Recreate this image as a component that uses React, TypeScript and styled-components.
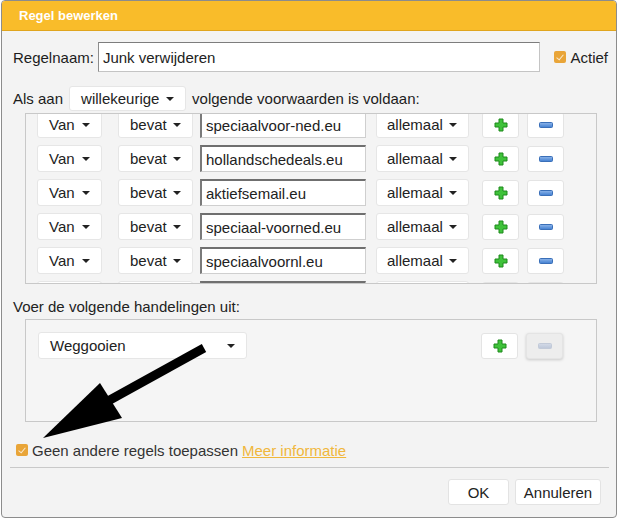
import React from "react";
import styled, { createGlobalStyle } from "styled-components";

const GlobalStyle = createGlobalStyle`
  html, body {
    margin: 0;
    padding: 0;
    background: #ffffff;
  }
  body {
    font-family: "Liberation Sans", Arial, sans-serif;
    color: #222;
  }
`;

type Condition = { value: string; partial?: boolean };

const conditions: Condition[] = [
  { value: "speciaalvoor-ned.eu" },
  { value: "hollandschedeals.eu" },
  { value: "aktiefsemail.eu" },
  { value: "speciaal-voorned.eu" },
  { value: "speciaalvoornl.eu" },
  // the next row is scrolled almost out of view
  { value: "", partial: true },
];

const PlusIcon = () => (
  <svg width="14" height="14" viewBox="0 0 14 14">
    <path
      d="M5 1h4v4h4v4H9v4H5V9H1V5h4z"
      fill="#3fc23a"
      stroke="#1f8a1c"
      strokeWidth="1"
      strokeLinejoin="round"
    />
  </svg>
);

const MinusIcon = ({ faded }: { faded?: boolean }) => (
  <svg width="14" height="6" viewBox="0 0 14 6">
    <defs>
      <linearGradient id={faded ? "mf" : "mb"} x1="0" y1="0" x2="0" y2="1">
        <stop offset="0" stopColor={faded ? "#d4dbe8" : "#8fb6ea"} />
        <stop offset="1" stopColor={faded ? "#bcc6d8" : "#3f7dd0"} />
      </linearGradient>
    </defs>
    <rect
      x="0.5"
      y="0.5"
      width="13"
      height="5"
      rx="1"
      fill={`url(#${faded ? "mf" : "mb"})`}
      stroke={faded ? "#c2cad8" : "#3a6fb8"}
    />
  </svg>
);

const App = () => {
  return (
    <>
      <GlobalStyle />
      <Dialog>
        <Header>Regel bewerken</Header>
        <Body>
          <NameRow>
            <Label>Regelnaam:</Label>
            <NameInput>Junk verwijderen</NameInput>
            <Check />
            <CheckLabel>Actief</CheckLabel>
          </NameRow>
          <FilterRow>
            <Label>Als aan</Label>
            <Select $width={117}>
              willekeurige
              <Caret />
            </Select>
            <Label>volgende voorwaarden is voldaan:</Label>
          </FilterRow>
          <ConditionBox>
            <ConditionList>
              {conditions.map((c, i) => (
                <ConditionRow key={i}>
                  <Select $width={65}>
                    {!c.partial && "Van"}
                    <Caret />
                  </Select>
                  <Select $width={75} $gap={16}>
                    {!c.partial && "bevat"}
                    <Caret />
                  </Select>
                  <ValueInput>{c.value}</ValueInput>
                  <Select $width={93} $gap={10} $indent={10}>
                    {!c.partial && "allemaal"}
                    <Caret />
                  </Select>
                  <IconButton $gap={13}>
                    <PlusIcon />
                  </IconButton>
                  <IconButton>
                    <MinusIcon />
                  </IconButton>
                </ConditionRow>
              ))}
            </ConditionList>
          </ConditionBox>
          <SectionLabel>Voer de volgende handelingen uit:</SectionLabel>
          <ActionBox>
            <ActionRow>
              <Select $width={209}>
                Weggooien
                <Caret />
              </Select>
              <Spacer />
              <IconButton>
                <PlusIcon />
              </IconButton>
              <IconButton $disabled>
                <MinusIcon faded />
              </IconButton>
            </ActionRow>
          </ActionBox>
          <StopRow>
            <Check />
            <span>Geen andere regels toepassen</span>
            <MoreLink>Meer informatie</MoreLink>
          </StopRow>
        </Body>
        <Separator />
        <Footer>
          <FooterButton $width={61}>OK</FooterButton>
          <FooterButton $width={86}>Annuleren</FooterButton>
        </Footer>
        <Arrow viewBox="0 0 616 518">
          <line x1="203" y1="348" x2="98" y2="406" stroke="#000" strokeWidth="9" />
          <polygon points="42,438 99,383 121,418" fill="#000" />
        </Arrow>
      </Dialog>
    </>
  );
};

export default App;

const Dialog = styled.div`
  position: relative;
  box-sizing: border-box;
  width: 616px;
  height: 518px;
  margin-left: 1px;
  border: 1px solid #8c8c8c;
  border-radius: 4px;
  background: #f3f3f3;
  overflow: hidden;
  display: flex;
  flex-direction: column;
`;

const Header = styled.div`
  height: 29px;
  flex: none;
  background: #f9bc2a;
  color: #fff;
  font-size: 13px;
  font-weight: 700;
  line-height: 29px;
  padding-left: 17px;
  border-bottom: 1px solid #e0a51e;
`;

const Body = styled.div`
  display: flex;
  flex-direction: column;
  padding: 0 8px 0 11px;
  font-size: 15px;
`;

const Label = styled.span`
  font-size: 15px;
  color: #1c1c1c;
  white-space: nowrap;
`;

const NameRow = styled.div`
  display: flex;
  align-items: center;
  margin-top: 11px;
  height: 30px;
`;

const NameInput = styled.div`
  box-sizing: border-box;
  width: 444px;
  height: 30px;
  margin-left: 4px;
  background: #fff;
  border: 1px solid #c4c4c4;
  border-top-color: #7d7d7d;
  border-left-color: #8d8d8d;
  padding-left: 4px;
  display: flex;
  align-items: center;
`;

const Check = styled.span`
  position: relative;
  flex: none;
  width: 12px;
  height: 12px;
  border-radius: 2px;
  background: #e9a538;
  margin-left: 14px;
  margin-right: 4px;

  &::after {
    content: "";
    position: absolute;
    left: 4px;
    top: 2px;
    width: 3px;
    height: 6px;
    border: solid rgba(255, 255, 255, 0.75);
    border-width: 0 1px 1px 0;
    transform: rotate(40deg);
  }
`;

const CheckLabel = styled.span`
  font-size: 15px;
`;

const FilterRow = styled.div`
  display: flex;
  align-items: center;
  gap: 6px;
  margin-top: 14px;
  height: 25px;

  & > div {
    height: 25px;
  }
`;

const Select = styled.div<{ $width: number; $gap?: number; $indent?: number }>`
  box-sizing: border-box;
  flex: none;
  width: ${(p) => p.$width}px;
  height: 27px;
  margin-left: ${(p) => p.$gap ?? 0}px;
  padding: 0 11px 0 ${(p) => p.$indent ?? 11}px;
  display: flex;
  align-items: center;
  justify-content: space-between;
  background: #fff;
  border: 1px solid #e6e6e6;
  border-radius: 3px;
  font-size: 15px;
  color: #222;

  & > span:only-child {
    margin-left: auto;
  }
`;

const Caret = styled.span`
  width: 0;
  height: 0;
  border-left: 4px solid transparent;
  border-right: 4px solid transparent;
  border-top: 4px solid #222;
`;

const ConditionBox = styled.div`
  box-sizing: border-box;
  height: 171px;
  margin: 2px 11px 0 12px;
  border: 1px solid #c8c8c8;
  background: #f4f4f4;
  overflow: hidden;
`;

const ConditionList = styled.div`
  display: flex;
  flex-direction: column;
  gap: 7px;
  margin-top: -3px;
  padding-left: 11px;
`;

const ConditionRow = styled.div`
  display: flex;
  align-items: center;
`;

const ValueInput = styled.div`
  box-sizing: border-box;
  flex: none;
  width: 166px;
  height: 27px;
  margin-left: 7px;
  padding-left: 4px;
  display: flex;
  align-items: center;
  background: #fff;
  border: 1px solid #cfcfcf;
  border-top: 2px solid #6f6f6f;
  border-left: 2px solid #7a7a7a;
  font-size: 15px;
`;

const IconButton = styled.div<{ $disabled?: boolean; $gap?: number }>`
  box-sizing: border-box;
  flex: none;
  width: 37px;
  height: 26px;
  margin-left: ${(p) => p.$gap ?? 8}px;
  display: flex;
  align-items: center;
  justify-content: center;
  background: ${(p) => (p.$disabled ? "#ededed" : "#fff")};
  border: 1px solid #e4e4e4;
  border-radius: 3px;
  box-shadow: ${(p) => (p.$disabled ? "0 1px 3px rgba(0,0,0,0.18)" : "none")};
`;

const SectionLabel = styled.div`
  margin-top: 14px;
  font-size: 15px;
  line-height: 18px;
`;

const ActionBox = styled.div`
  box-sizing: border-box;
  height: 103px;
  margin: 3px 11px 0 12px;
  padding: 12px 0 0 12px;
  border: 1px solid #c8c8c8;
  background: #f5f5f5;
`;

const ActionRow = styled.div`
  display: flex;
  align-items: center;
  width: 525px;
`;

const Spacer = styled.div`
  flex: 1;
`;

const StopRow = styled.div`
  display: flex;
  align-items: center;
  margin-top: 19px;
  height: 18px;
  font-size: 15px;
  color: #333;

  & > span:first-child {
    margin-left: 3px;
  }
`;

const MoreLink = styled.a`
  margin-left: 4px;
  color: #f0b73c;
  text-decoration: underline;
  cursor: pointer;
`;

const Separator = styled.div`
  height: 1px;
  margin: 8px 7px 0 8px;
  background: #c9c9c9;
`;

const Footer = styled.div`
  display: flex;
  justify-content: flex-end;
  gap: 6px;
  margin-top: 11px;
  padding-right: 15px;
`;

const FooterButton = styled.div<{ $width: number }>`
  box-sizing: border-box;
  width: ${(p) => p.$width}px;
  height: 26px;
  display: flex;
  align-items: center;
  justify-content: center;
  background: #fff;
  border: 1px solid #e3e3e3;
  border-radius: 3px;
  font-size: 15px;
  color: #222;
`;

const Arrow = styled.svg`
  position: absolute;
  left: -1px;
  top: -1px;
  width: 616px;
  height: 518px;
  pointer-events: none;
`;
